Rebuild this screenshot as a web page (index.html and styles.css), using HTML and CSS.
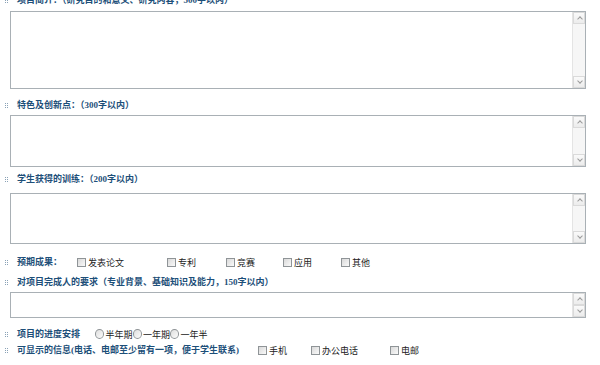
FILE: index.html
```html
<!DOCTYPE html>
<html lang="zh-CN">
<head>
    <meta charset="UTF-8">
    <title>项目申报</title>
    <link rel="stylesheet" href="styles.css">
</head>
<body>
    <div class="form">
        <div class="label first"><span class="dot"></span>项目简介：（研究目的和意义、研究内容，500字以内）</div>
        <div class="box tall">
            <textarea></textarea>
            <div class="bar"><span class="btn up"></span><span class="btn down"></span></div>
        </div>

        <div class="label l2"><span class="dot"></span>特色及创新点：（300字以内）</div>
        <div class="box mid t2">
            <textarea></textarea>
            <div class="bar"><span class="btn up"></span><span class="btn down"></span></div>
        </div>

        <div class="label l3"><span class="dot"></span>学生获得的训练：（200字以内）</div>
        <div class="box mid t3">
            <textarea></textarea>
            <div class="bar"><span class="btn up"></span><span class="btn down"></span></div>
        </div>

        <div class="row results">
            <div class="label"><span class="dot"></span>预期成果：</div>
            <label class="opt"><span class="cb"></span>发表论文</label>
            <label class="opt"><span class="cb"></span>专利</label>
            <label class="opt"><span class="cb"></span>竞赛</label>
            <label class="opt"><span class="cb"></span>应用</label>
            <label class="opt"><span class="cb"></span>其他</label>
        </div>

        <div class="label l4"><span class="dot"></span>对项目完成人的要求（专业背景、基础知识及能力，150字以内）</div>
        <div class="box short t4">
            <textarea></textarea>
            <div class="bar"><span class="btn up"></span><span class="btn down"></span></div>
        </div>

        <div class="row plan">
            <div class="label"><span class="dot"></span>项目的进度安排</div>
            <label class="opt"><span class="rb"></span>半年期</label>
            <label class="opt"><span class="rb"></span>一年期</label>
            <label class="opt"><span class="rb"></span>一年半</label>
        </div>

        <div class="row info">
            <div class="label"><span class="dot"></span>可显示的信息(电话、电邮至少留有一项，便于学生联系)</div>
            <label class="opt"><span class="cb"></span>手机</label>
            <label class="opt"><span class="cb"></span>办公电话</label>
            <label class="opt"><span class="cb"></span>电邮</label>
        </div>
    </div>
</body>
</html>
```

FILE: styles.css
```css
* {
    margin: 0;
    padding: 0;
    box-sizing: border-box;
}

body {
    background: #fff;
    font-family: "Liberation Serif", "Noto Sans CJK SC", serif;
    font-size: 9px;
    color: #222;
    overflow: hidden;
}

.form {
    margin-top: -8px;
}

.label {
    display: flex;
    align-items: center;
    height: 16px;
    line-height: 16px;
    font-weight: bold;
    color: #1d4f79;
    white-space: nowrap;
}

.dot {
    width: 3px;
    height: 5px;
    margin: 0 9px 0 5px;
    border-left: 1px dotted #8aa2b6;
    border-right: 1px dotted #8aa2b6;
}

/* text boxes */
.box {
    display: flex;
    width: 576px;
    margin-left: 10px;
    border: 1px solid #a9b0b5;
    background: #fff;
}

.box textarea {
    flex: 1;
    border: none;
    outline: none;
    resize: none;
    background: transparent;
}

.tall { height: 78px; margin-top: 3px; }
.mid { height: 52px; }
.short { height: 26px; }

.l2 { margin-top: 8px; }
.t2 { margin-top: 2px; }
.l3 { margin-top: 4px; }
.t3 { margin-top: 6px; height: 51px; }
.l4 { margin-top: 4px; }
.t4 { margin-top: 2px; }

.bar {
    width: 13px;
    display: flex;
    flex-direction: column;
    justify-content: space-between;
    background: #f6f6f6;
    border-left: 1px solid #e4e4e4;
}

.btn {
    position: relative;
    height: 12px;
    border: 1px solid #dadada;
    background: linear-gradient(#fafafa, #ececec);
}

.btn::after {
    content: "";
    position: absolute;
    left: 4px;
    width: 3px;
    height: 3px;
    border-left: 1px solid #9a9a9a;
    border-top: 1px solid #9a9a9a;
}

.up::after { top: 4px; transform: rotate(45deg); }
.down::after { top: 2px; transform: rotate(225deg); }

/* option rows */
.row {
    display: flex;
    align-items: center;
    height: 16px;
}

.opt {
    display: flex;
    align-items: center;
    white-space: nowrap;
    color: #222;
}

.cb {
    width: 9px;
    height: 9px;
    margin-right: 2px;
    border: 1px solid #8f9497;
    background: linear-gradient(135deg, #d9d9d9, #fafafa);
}

.rb {
    width: 10px;
    height: 10px;
    margin-right: 1px;
    border: 1px solid #8f9497;
    border-radius: 50%;
    background: linear-gradient(135deg, #dedede, #fcfcfc);
}

.results { margin-top: 10px; }
.results .label { width: 77px; }
.results .opt:nth-of-type(1) { width: 90px; }
.results .opt:nth-of-type(2) { width: 59px; }
.results .opt:nth-of-type(3) { width: 57px; }
.results .opt:nth-of-type(4) { width: 58px; }

.plan { margin-top: 8px; }
.plan .label { width: 95px; }
.plan .opt { width: 37.5px; }

.info .label { width: 258px; }
.info .opt:nth-of-type(1) { width: 53px; }
.info .opt:nth-of-type(2) { width: 79px; }
```
